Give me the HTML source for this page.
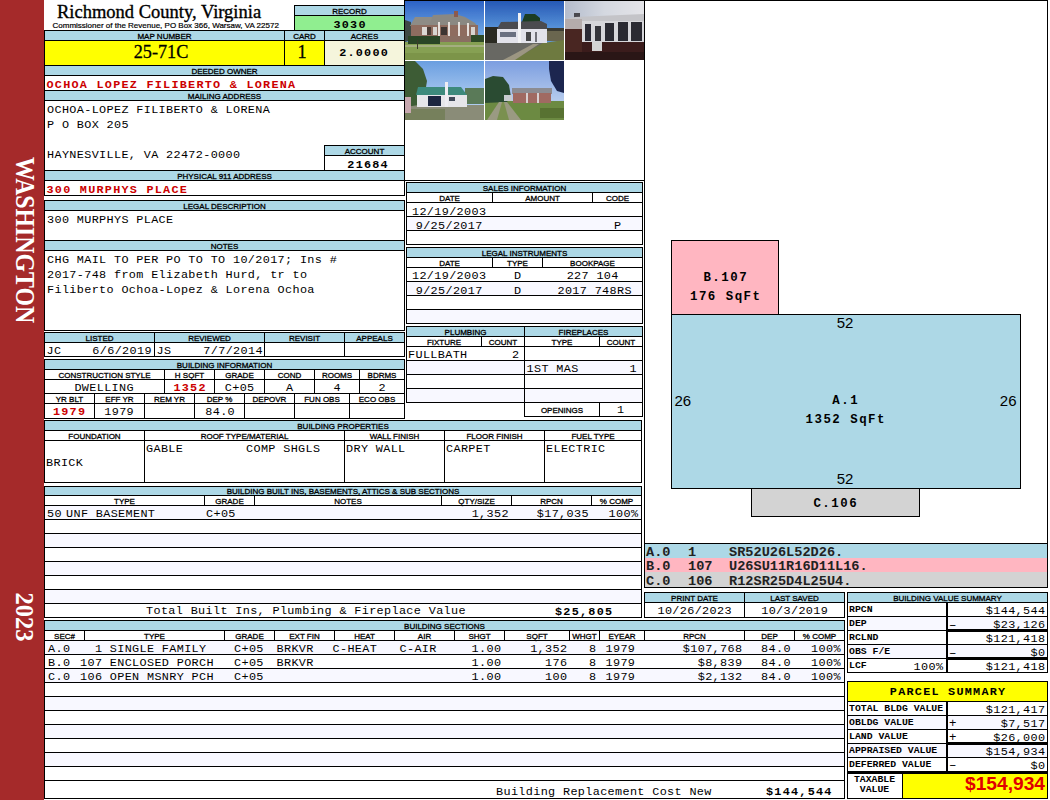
<!DOCTYPE html>
<html><head><meta charset="utf-8"><style>
html,body{margin:0;padding:0;background:#fff;width:1050px;height:800px;overflow:hidden}
#p{position:relative;width:1050px;height:800px;overflow:hidden}
#p div{position:absolute}
.t{white-space:pre}
</style></head><body><div id="p">
<div style="left:0px;top:0px;width:44px;height:800px;background:#A52A2A"></div>
<div class="t" style="left:57px;top:3.31px;font-family:'Liberation Serif', serif;font-size:18.5px;line-height:18.5px;color:#000;font-weight:normal;-webkit-text-stroke:0.35px #000;">Richmond County, Virginia</div>
<div class="t" style="left:52.5px;top:22.23px;font-family:'Liberation Sans', sans-serif;font-size:8.0px;line-height:8.0px;color:#000;font-weight:normal;-webkit-text-stroke:0.2px #000;">Commissioner of the Revenue, PO Box 366, Warsaw, VA 22572</div>
<div style="left:294px;top:5px;width:110px;height:10px;background:#ADD8E6"></div>
<div style="left:294px;top:15px;width:110px;height:15px;background:#90EE90"></div>
<div style="left:294px;top:5px;width:111px;height:1px;background:#000"></div>
<div style="left:294px;top:30px;width:111px;height:1px;background:#000"></div>
<div style="left:294px;top:5px;width:1px;height:26px;background:#000"></div>
<div style="left:404px;top:5px;width:1px;height:26px;background:#000"></div>
<div style="left:294px;top:15px;width:111px;height:1px;background:#000"></div>
<div class="t" style="left:49.5px;width:600px;text-align:center;top:8.23px;font-family:'Liberation Sans', sans-serif;font-size:8.0px;line-height:8.0px;color:#000;font-weight:normal;-webkit-text-stroke:0.3px #000;">RECORD</div>
<div class="t" style="left:50.125px;width:600px;text-align:center;top:19.96px;font-family:'Liberation Mono', monospace;font-size:11.8px;line-height:11.8px;color:#000;font-weight:bold;letter-spacing:1.25px;">3030</div>
<div style="left:44px;top:30px;width:360px;height:10px;background:#ADD8E6"></div>
<div style="left:44px;top:40px;width:280px;height:25px;background:#FFFF00"></div>
<div style="left:324px;top:40px;width:80px;height:25px;background:#F5F5DC"></div>
<div style="left:44px;top:65px;width:360px;height:10px;background:#ADD8E6"></div>
<div style="left:44px;top:90px;width:360px;height:10px;background:#ADD8E6"></div>
<div style="left:44px;top:170px;width:360px;height:10px;background:#ADD8E6"></div>
<div style="left:324px;top:145px;width:80px;height:10px;background:#ADD8E6"></div>
<div style="left:44px;top:30px;width:361px;height:1px;background:#000"></div>
<div style="left:44px;top:195px;width:361px;height:1px;background:#000"></div>
<div style="left:44px;top:30px;width:1px;height:166px;background:#000"></div>
<div style="left:404px;top:30px;width:1px;height:166px;background:#000"></div>
<div style="left:44px;top:40px;width:361px;height:1px;background:#000"></div>
<div style="left:44px;top:65px;width:361px;height:1px;background:#000"></div>
<div style="left:44px;top:75px;width:361px;height:1px;background:#000"></div>
<div style="left:44px;top:90px;width:361px;height:1px;background:#000"></div>
<div style="left:44px;top:100px;width:361px;height:1px;background:#000"></div>
<div style="left:44px;top:170px;width:361px;height:1px;background:#000"></div>
<div style="left:44px;top:180px;width:361px;height:1px;background:#000"></div>
<div style="left:284px;top:30px;width:1px;height:36px;background:#000"></div>
<div style="left:324px;top:30px;width:1px;height:36px;background:#000"></div>
<div style="left:324px;top:145px;width:1px;height:26px;background:#000"></div>
<div style="left:324px;top:145px;width:81px;height:1px;background:#000"></div>
<div style="left:324px;top:155px;width:81px;height:1px;background:#000"></div>
<div class="t" style="left:-135.5px;width:600px;text-align:center;top:33.23px;font-family:'Liberation Sans', sans-serif;font-size:8.0px;line-height:8.0px;color:#000;font-weight:normal;-webkit-text-stroke:0.3px #000;">MAP NUMBER</div>
<div class="t" style="left:4.5px;width:600px;text-align:center;top:33.23px;font-family:'Liberation Sans', sans-serif;font-size:8.0px;line-height:8.0px;color:#000;font-weight:normal;-webkit-text-stroke:0.3px #000;">CARD</div>
<div class="t" style="left:64.5px;width:600px;text-align:center;top:33.23px;font-family:'Liberation Sans', sans-serif;font-size:8.0px;line-height:8.0px;color:#000;font-weight:normal;-webkit-text-stroke:0.3px #000;">ACRES</div>
<div class="t" style="left:-139px;width:600px;text-align:center;top:43.26px;font-family:'Liberation Serif', serif;font-size:18.2px;line-height:18.2px;color:#000;font-weight:normal;-webkit-text-stroke:0.3px #000;">25-71C</div>
<div class="t" style="left:2px;width:600px;text-align:center;top:43.26px;font-family:'Liberation Serif', serif;font-size:18.2px;line-height:18.2px;color:#000;font-weight:normal;-webkit-text-stroke:0.3px #000;">1</div>
<div class="t" style="left:64.125px;width:600px;text-align:center;top:47.96px;font-family:'Liberation Mono', monospace;font-size:11.8px;line-height:11.8px;color:#000;font-weight:bold;letter-spacing:1.25px;">2.0000</div>
<div class="t" style="left:-75.5px;width:600px;text-align:center;top:68.23px;font-family:'Liberation Sans', sans-serif;font-size:8.0px;line-height:8.0px;color:#000;font-weight:normal;-webkit-text-stroke:0.3px #000;">DEEDED OWNER</div>
<div class="t" style="left:46.5px;top:79.96px;font-family:'Liberation Mono', monospace;font-size:11.8px;line-height:11.8px;color:#CC0000;font-weight:bold;letter-spacing:1.25px;">OCHOA LOPEZ FILIBERTO &amp; LORENA</div>
<div class="t" style="left:-75.5px;width:600px;text-align:center;top:93.23px;font-family:'Liberation Sans', sans-serif;font-size:8.0px;line-height:8.0px;color:#000;font-weight:normal;-webkit-text-stroke:0.3px #000;">MAILING ADDRESS</div>
<div class="t" style="left:47px;top:104.96px;font-family:'Liberation Mono', monospace;font-size:11.8px;line-height:11.8px;color:#000;font-weight:normal;letter-spacing:0.36px;">OCHOA-LOPEZ FILIBERTO &amp; LORENA</div>
<div class="t" style="left:47px;top:119.96px;font-family:'Liberation Mono', monospace;font-size:11.8px;line-height:11.8px;color:#000;font-weight:normal;letter-spacing:0.36px;">P O BOX 205</div>
<div class="t" style="left:47px;top:149.96px;font-family:'Liberation Mono', monospace;font-size:11.8px;line-height:11.8px;color:#000;font-weight:normal;letter-spacing:0.36px;">HAYNESVILLE, VA 22472-0000</div>
<div class="t" style="left:64.5px;width:600px;text-align:center;top:148.23px;font-family:'Liberation Sans', sans-serif;font-size:8.0px;line-height:8.0px;color:#000;font-weight:normal;-webkit-text-stroke:0.3px #000;">ACCOUNT</div>
<div class="t" style="left:68.125px;width:600px;text-align:center;top:159.96px;font-family:'Liberation Mono', monospace;font-size:11.8px;line-height:11.8px;color:#000;font-weight:bold;letter-spacing:1.25px;">21684</div>
<div class="t" style="left:-75.5px;width:600px;text-align:center;top:173.23px;font-family:'Liberation Sans', sans-serif;font-size:8.0px;line-height:8.0px;color:#000;font-weight:normal;-webkit-text-stroke:0.3px #000;">PHYSICAL 911 ADDRESS</div>
<div class="t" style="left:46.5px;top:184.96px;font-family:'Liberation Mono', monospace;font-size:11.8px;line-height:11.8px;color:#CC0000;font-weight:bold;letter-spacing:1.25px;">300 MURPHYS PLACE</div>
<div style="left:44px;top:200px;width:360px;height:10px;background:#ADD8E6"></div>
<div style="left:44px;top:240px;width:360px;height:10px;background:#ADD8E6"></div>
<div style="left:44px;top:200px;width:361px;height:1px;background:#000"></div>
<div style="left:44px;top:330px;width:361px;height:1px;background:#000"></div>
<div style="left:44px;top:200px;width:1px;height:131px;background:#000"></div>
<div style="left:404px;top:200px;width:1px;height:131px;background:#000"></div>
<div style="left:44px;top:210px;width:361px;height:1px;background:#000"></div>
<div style="left:44px;top:240px;width:361px;height:1px;background:#000"></div>
<div style="left:44px;top:250px;width:361px;height:1px;background:#000"></div>
<div class="t" style="left:-75.5px;width:600px;text-align:center;top:203.23px;font-family:'Liberation Sans', sans-serif;font-size:8.0px;line-height:8.0px;color:#000;font-weight:normal;-webkit-text-stroke:0.3px #000;">LEGAL DESCRIPTION</div>
<div class="t" style="left:47px;top:214.96px;font-family:'Liberation Mono', monospace;font-size:11.8px;line-height:11.8px;color:#000;font-weight:normal;letter-spacing:0.36px;">300 MURPHYS PLACE</div>
<div class="t" style="left:-75.5px;width:600px;text-align:center;top:243.23px;font-family:'Liberation Sans', sans-serif;font-size:8.0px;line-height:8.0px;color:#000;font-weight:normal;-webkit-text-stroke:0.3px #000;">NOTES</div>
<div class="t" style="left:47px;top:254.96px;font-family:'Liberation Mono', monospace;font-size:11.8px;line-height:11.8px;color:#000;font-weight:normal;letter-spacing:0.36px;">CHG MAIL TO PER PO TO TO 10/2017; Ins #</div>
<div class="t" style="left:47px;top:269.96px;font-family:'Liberation Mono', monospace;font-size:11.8px;line-height:11.8px;color:#000;font-weight:normal;letter-spacing:0.36px;">2017-748 from Elizabeth Hurd, tr to</div>
<div class="t" style="left:47px;top:284.96px;font-family:'Liberation Mono', monospace;font-size:11.8px;line-height:11.8px;color:#000;font-weight:normal;letter-spacing:0.36px;">Filiberto Ochoa-Lopez &amp; Lorena Ochoa</div>
<div style="left:44px;top:332px;width:360px;height:10px;background:#ADD8E6"></div>
<div style="left:44px;top:332px;width:361px;height:1px;background:#000"></div>
<div style="left:44px;top:356px;width:361px;height:1px;background:#000"></div>
<div style="left:44px;top:332px;width:1px;height:25px;background:#000"></div>
<div style="left:404px;top:332px;width:1px;height:25px;background:#000"></div>
<div style="left:44px;top:342px;width:361px;height:1px;background:#000"></div>
<div style="left:154px;top:332px;width:1px;height:25px;background:#000"></div>
<div style="left:264px;top:332px;width:1px;height:25px;background:#000"></div>
<div style="left:344px;top:332px;width:1px;height:25px;background:#000"></div>
<div class="t" style="left:-200.5px;width:600px;text-align:center;top:335.23px;font-family:'Liberation Sans', sans-serif;font-size:8.0px;line-height:8.0px;color:#000;font-weight:normal;-webkit-text-stroke:0.3px #000;">LISTED</div>
<div class="t" style="left:-90.5px;width:600px;text-align:center;top:335.23px;font-family:'Liberation Sans', sans-serif;font-size:8.0px;line-height:8.0px;color:#000;font-weight:normal;-webkit-text-stroke:0.3px #000;">REVIEWED</div>
<div class="t" style="left:4.5px;width:600px;text-align:center;top:335.23px;font-family:'Liberation Sans', sans-serif;font-size:8.0px;line-height:8.0px;color:#000;font-weight:normal;-webkit-text-stroke:0.3px #000;">REVISIT</div>
<div class="t" style="left:74.5px;width:600px;text-align:center;top:335.23px;font-family:'Liberation Sans', sans-serif;font-size:8.0px;line-height:8.0px;color:#000;font-weight:normal;-webkit-text-stroke:0.3px #000;">APPEALS</div>
<div class="t" style="left:46.5px;top:345.96px;font-family:'Liberation Mono', monospace;font-size:11.8px;line-height:11.8px;color:#000;font-weight:normal;letter-spacing:0.36px;">JC</div>
<div class="t" style="left:-448.14px;width:600px;text-align:right;top:345.96px;font-family:'Liberation Mono', monospace;font-size:11.8px;line-height:11.8px;color:#000;font-weight:normal;letter-spacing:0.36px;">6/6/2019</div>
<div class="t" style="left:156.5px;top:345.96px;font-family:'Liberation Mono', monospace;font-size:11.8px;line-height:11.8px;color:#000;font-weight:normal;letter-spacing:0.36px;">JS</div>
<div class="t" style="left:-337.14px;width:600px;text-align:right;top:345.96px;font-family:'Liberation Mono', monospace;font-size:11.8px;line-height:11.8px;color:#000;font-weight:normal;letter-spacing:0.36px;">7/7/2014</div>
<div style="left:44px;top:359px;width:360px;height:10px;background:#ADD8E6"></div>
<div style="left:44px;top:359px;width:361px;height:1px;background:#000"></div>
<div style="left:44px;top:418px;width:361px;height:1px;background:#000"></div>
<div style="left:44px;top:359px;width:1px;height:60px;background:#000"></div>
<div style="left:404px;top:359px;width:1px;height:60px;background:#000"></div>
<div style="left:44px;top:369px;width:361px;height:1px;background:#000"></div>
<div style="left:44px;top:379px;width:361px;height:1px;background:#000"></div>
<div style="left:44px;top:393px;width:361px;height:1px;background:#000"></div>
<div style="left:44px;top:403px;width:361px;height:1px;background:#000"></div>
<div style="left:164px;top:369px;width:1px;height:25px;background:#000"></div>
<div style="left:214px;top:369px;width:1px;height:25px;background:#000"></div>
<div style="left:264px;top:369px;width:1px;height:25px;background:#000"></div>
<div style="left:314px;top:369px;width:1px;height:25px;background:#000"></div>
<div style="left:359px;top:369px;width:1px;height:25px;background:#000"></div>
<div style="left:94px;top:393px;width:1px;height:26px;background:#000"></div>
<div style="left:144px;top:393px;width:1px;height:26px;background:#000"></div>
<div style="left:194px;top:393px;width:1px;height:26px;background:#000"></div>
<div style="left:244px;top:393px;width:1px;height:26px;background:#000"></div>
<div style="left:294px;top:393px;width:1px;height:26px;background:#000"></div>
<div style="left:349px;top:393px;width:1px;height:26px;background:#000"></div>
<div class="t" style="left:-75.5px;width:600px;text-align:center;top:362.23px;font-family:'Liberation Sans', sans-serif;font-size:8.0px;line-height:8.0px;color:#000;font-weight:normal;-webkit-text-stroke:0.3px #000;">BUILDING INFORMATION</div>
<div class="t" style="left:-195.5px;width:600px;text-align:center;top:372.23px;font-family:'Liberation Sans', sans-serif;font-size:8.0px;line-height:8.0px;color:#000;font-weight:normal;-webkit-text-stroke:0.3px #000;">CONSTRUCTION STYLE</div>
<div class="t" style="left:-110.5px;width:600px;text-align:center;top:372.23px;font-family:'Liberation Sans', sans-serif;font-size:8.0px;line-height:8.0px;color:#000;font-weight:normal;-webkit-text-stroke:0.3px #000;">H SQFT</div>
<div class="t" style="left:-60.5px;width:600px;text-align:center;top:372.23px;font-family:'Liberation Sans', sans-serif;font-size:8.0px;line-height:8.0px;color:#000;font-weight:normal;-webkit-text-stroke:0.3px #000;">GRADE</div>
<div class="t" style="left:-10.5px;width:600px;text-align:center;top:372.23px;font-family:'Liberation Sans', sans-serif;font-size:8.0px;line-height:8.0px;color:#000;font-weight:normal;-webkit-text-stroke:0.3px #000;">COND</div>
<div class="t" style="left:37.0px;width:600px;text-align:center;top:372.23px;font-family:'Liberation Sans', sans-serif;font-size:8.0px;line-height:8.0px;color:#000;font-weight:normal;-webkit-text-stroke:0.3px #000;">ROOMS</div>
<div class="t" style="left:82.0px;width:600px;text-align:center;top:372.23px;font-family:'Liberation Sans', sans-serif;font-size:8.0px;line-height:8.0px;color:#000;font-weight:normal;-webkit-text-stroke:0.3px #000;">BDRMS</div>
<div class="t" style="left:-230.5px;width:600px;text-align:center;top:396.23px;font-family:'Liberation Sans', sans-serif;font-size:8.0px;line-height:8.0px;color:#000;font-weight:normal;-webkit-text-stroke:0.3px #000;">YR BLT</div>
<div class="t" style="left:-180.5px;width:600px;text-align:center;top:396.23px;font-family:'Liberation Sans', sans-serif;font-size:8.0px;line-height:8.0px;color:#000;font-weight:normal;-webkit-text-stroke:0.3px #000;">EFF YR</div>
<div class="t" style="left:-130.5px;width:600px;text-align:center;top:396.23px;font-family:'Liberation Sans', sans-serif;font-size:8.0px;line-height:8.0px;color:#000;font-weight:normal;-webkit-text-stroke:0.3px #000;">REM YR</div>
<div class="t" style="left:-80.5px;width:600px;text-align:center;top:396.23px;font-family:'Liberation Sans', sans-serif;font-size:8.0px;line-height:8.0px;color:#000;font-weight:normal;-webkit-text-stroke:0.3px #000;">DEP %</div>
<div class="t" style="left:-30.5px;width:600px;text-align:center;top:396.23px;font-family:'Liberation Sans', sans-serif;font-size:8.0px;line-height:8.0px;color:#000;font-weight:normal;-webkit-text-stroke:0.3px #000;">DEPOVR</div>
<div class="t" style="left:22.0px;width:600px;text-align:center;top:396.23px;font-family:'Liberation Sans', sans-serif;font-size:8.0px;line-height:8.0px;color:#000;font-weight:normal;-webkit-text-stroke:0.3px #000;">FUN OBS</div>
<div class="t" style="left:77.0px;width:600px;text-align:center;top:396.23px;font-family:'Liberation Sans', sans-serif;font-size:8.0px;line-height:8.0px;color:#000;font-weight:normal;-webkit-text-stroke:0.3px #000;">ECO OBS</div>
<div class="t" style="left:-195.82px;width:600px;text-align:center;top:382.96px;font-family:'Liberation Mono', monospace;font-size:11.8px;line-height:11.8px;color:#000;font-weight:normal;letter-spacing:0.36px;">DWELLING</div>
<div class="t" style="left:-109.875px;width:600px;text-align:center;top:382.96px;font-family:'Liberation Mono', monospace;font-size:11.8px;line-height:11.8px;color:#CC0000;font-weight:bold;letter-spacing:1.25px;">1352</div>
<div class="t" style="left:-60.31999999999999px;width:600px;text-align:center;top:382.96px;font-family:'Liberation Mono', monospace;font-size:11.8px;line-height:11.8px;color:#000;font-weight:normal;letter-spacing:0.36px;">C+05</div>
<div class="t" style="left:-10.319999999999993px;width:600px;text-align:center;top:382.96px;font-family:'Liberation Mono', monospace;font-size:11.8px;line-height:11.8px;color:#000;font-weight:normal;letter-spacing:0.36px;">A</div>
<div class="t" style="left:37.18000000000001px;width:600px;text-align:center;top:382.96px;font-family:'Liberation Mono', monospace;font-size:11.8px;line-height:11.8px;color:#000;font-weight:normal;letter-spacing:0.36px;">4</div>
<div class="t" style="left:82.18px;width:600px;text-align:center;top:382.96px;font-family:'Liberation Mono', monospace;font-size:11.8px;line-height:11.8px;color:#000;font-weight:normal;letter-spacing:0.36px;">2</div>
<div class="t" style="left:-230.375px;width:600px;text-align:center;top:406.96px;font-family:'Liberation Mono', monospace;font-size:11.8px;line-height:11.8px;color:#CC0000;font-weight:bold;letter-spacing:1.25px;">1979</div>
<div class="t" style="left:-180.82px;width:600px;text-align:center;top:406.96px;font-family:'Liberation Mono', monospace;font-size:11.8px;line-height:11.8px;color:#000;font-weight:normal;letter-spacing:0.36px;">1979</div>
<div class="t" style="left:-79.82px;width:600px;text-align:center;top:406.96px;font-family:'Liberation Mono', monospace;font-size:11.8px;line-height:11.8px;color:#000;font-weight:normal;letter-spacing:0.36px;">84.0</div>
<div style="left:44px;top:420px;width:597px;height:10px;background:#ADD8E6"></div>
<div style="left:44px;top:420px;width:598px;height:1px;background:#000"></div>
<div style="left:44px;top:482px;width:598px;height:1px;background:#000"></div>
<div style="left:44px;top:420px;width:1px;height:63px;background:#000"></div>
<div style="left:641px;top:420px;width:1px;height:63px;background:#000"></div>
<div style="left:44px;top:430px;width:598px;height:1px;background:#000"></div>
<div style="left:44px;top:440px;width:598px;height:1px;background:#000"></div>
<div style="left:144px;top:430px;width:1px;height:53px;background:#000"></div>
<div style="left:344px;top:430px;width:1px;height:53px;background:#000"></div>
<div style="left:444px;top:430px;width:1px;height:53px;background:#000"></div>
<div style="left:544px;top:430px;width:1px;height:53px;background:#000"></div>
<div class="t" style="left:43.0px;width:600px;text-align:center;top:423.23px;font-family:'Liberation Sans', sans-serif;font-size:8.0px;line-height:8.0px;color:#000;font-weight:normal;-webkit-text-stroke:0.3px #000;">BUILDING PROPERTIES</div>
<div class="t" style="left:-205.5px;width:600px;text-align:center;top:433.23px;font-family:'Liberation Sans', sans-serif;font-size:8.0px;line-height:8.0px;color:#000;font-weight:normal;-webkit-text-stroke:0.3px #000;">FOUNDATION</div>
<div class="t" style="left:-55.5px;width:600px;text-align:center;top:433.23px;font-family:'Liberation Sans', sans-serif;font-size:8.0px;line-height:8.0px;color:#000;font-weight:normal;-webkit-text-stroke:0.3px #000;">ROOF TYPE/MATERIAL</div>
<div class="t" style="left:94.5px;width:600px;text-align:center;top:433.23px;font-family:'Liberation Sans', sans-serif;font-size:8.0px;line-height:8.0px;color:#000;font-weight:normal;-webkit-text-stroke:0.3px #000;">WALL FINISH</div>
<div class="t" style="left:194.5px;width:600px;text-align:center;top:433.23px;font-family:'Liberation Sans', sans-serif;font-size:8.0px;line-height:8.0px;color:#000;font-weight:normal;-webkit-text-stroke:0.3px #000;">FLOOR FINISH</div>
<div class="t" style="left:293.0px;width:600px;text-align:center;top:433.23px;font-family:'Liberation Sans', sans-serif;font-size:8.0px;line-height:8.0px;color:#000;font-weight:normal;-webkit-text-stroke:0.3px #000;">FUEL TYPE</div>
<div class="t" style="left:46px;top:457.96px;font-family:'Liberation Mono', monospace;font-size:11.8px;line-height:11.8px;color:#000;font-weight:normal;letter-spacing:0.36px;">BRICK</div>
<div class="t" style="left:146px;top:443.96px;font-family:'Liberation Mono', monospace;font-size:11.8px;line-height:11.8px;color:#000;font-weight:normal;letter-spacing:0.36px;">GABLE</div>
<div class="t" style="left:246px;top:443.96px;font-family:'Liberation Mono', monospace;font-size:11.8px;line-height:11.8px;color:#000;font-weight:normal;letter-spacing:0.36px;">COMP SHGLS</div>
<div class="t" style="left:346px;top:443.96px;font-family:'Liberation Mono', monospace;font-size:11.8px;line-height:11.8px;color:#000;font-weight:normal;letter-spacing:0.36px;">DRY WALL</div>
<div class="t" style="left:446px;top:443.96px;font-family:'Liberation Mono', monospace;font-size:11.8px;line-height:11.8px;color:#000;font-weight:normal;letter-spacing:0.36px;">CARPET</div>
<div class="t" style="left:546px;top:443.96px;font-family:'Liberation Mono', monospace;font-size:11.8px;line-height:11.8px;color:#000;font-weight:normal;letter-spacing:0.36px;">ELECTRIC</div>
<div style="left:44px;top:486px;width:597px;height:9px;background:#ADD8E6"></div>
<div style="left:44px;top:505px;width:597px;height:14px;background:#F8F8FF"></div>
<div style="left:44px;top:533px;width:597px;height:14px;background:#F8F8FF"></div>
<div style="left:44px;top:561px;width:597px;height:14px;background:#F8F8FF"></div>
<div style="left:44px;top:589px;width:597px;height:14px;background:#F8F8FF"></div>
<div style="left:44px;top:486px;width:598px;height:1px;background:#000"></div>
<div style="left:44px;top:617px;width:598px;height:1px;background:#000"></div>
<div style="left:44px;top:486px;width:1px;height:132px;background:#000"></div>
<div style="left:641px;top:486px;width:1px;height:132px;background:#000"></div>
<div style="left:44px;top:495px;width:598px;height:1px;background:#000"></div>
<div style="left:44px;top:505px;width:598px;height:1px;background:#000"></div>
<div style="left:44px;top:519px;width:598px;height:1px;background:#000"></div>
<div style="left:44px;top:533px;width:598px;height:1px;background:#000"></div>
<div style="left:44px;top:547px;width:598px;height:1px;background:#000"></div>
<div style="left:44px;top:561px;width:598px;height:1px;background:#000"></div>
<div style="left:44px;top:575px;width:598px;height:1px;background:#000"></div>
<div style="left:44px;top:589px;width:598px;height:1px;background:#000"></div>
<div style="left:44px;top:603px;width:598px;height:1px;background:#000"></div>
<div style="left:204px;top:495px;width:1px;height:11px;background:#000"></div>
<div style="left:254px;top:495px;width:1px;height:11px;background:#000"></div>
<div style="left:441px;top:495px;width:1px;height:11px;background:#000"></div>
<div style="left:511px;top:495px;width:1px;height:11px;background:#000"></div>
<div style="left:591px;top:495px;width:1px;height:11px;background:#000"></div>
<div class="t" style="left:43.0px;width:600px;text-align:center;top:488.23px;font-family:'Liberation Sans', sans-serif;font-size:8.0px;line-height:8.0px;color:#000;font-weight:normal;-webkit-text-stroke:0.3px #000;">BUILDING BUILT INS, BASEMENTS, ATTICS &amp; SUB SECTIONS</div>
<div class="t" style="left:-175.5px;width:600px;text-align:center;top:498.23px;font-family:'Liberation Sans', sans-serif;font-size:8.0px;line-height:8.0px;color:#000;font-weight:normal;-webkit-text-stroke:0.3px #000;">TYPE</div>
<div class="t" style="left:-70.5px;width:600px;text-align:center;top:498.23px;font-family:'Liberation Sans', sans-serif;font-size:8.0px;line-height:8.0px;color:#000;font-weight:normal;-webkit-text-stroke:0.3px #000;">GRADE</div>
<div class="t" style="left:48.0px;width:600px;text-align:center;top:498.23px;font-family:'Liberation Sans', sans-serif;font-size:8.0px;line-height:8.0px;color:#000;font-weight:normal;-webkit-text-stroke:0.3px #000;">NOTES</div>
<div class="t" style="left:176.5px;width:600px;text-align:center;top:498.23px;font-family:'Liberation Sans', sans-serif;font-size:8.0px;line-height:8.0px;color:#000;font-weight:normal;-webkit-text-stroke:0.3px #000;">QTY/SIZE</div>
<div class="t" style="left:251.5px;width:600px;text-align:center;top:498.23px;font-family:'Liberation Sans', sans-serif;font-size:8.0px;line-height:8.0px;color:#000;font-weight:normal;-webkit-text-stroke:0.3px #000;">RPCN</div>
<div class="t" style="left:316.5px;width:600px;text-align:center;top:498.23px;font-family:'Liberation Sans', sans-serif;font-size:8.0px;line-height:8.0px;color:#000;font-weight:normal;-webkit-text-stroke:0.3px #000;">% COMP</div>
<div class="t" style="left:47px;top:508.96px;font-family:'Liberation Mono', monospace;font-size:11.8px;line-height:11.8px;color:#000;font-weight:normal;letter-spacing:0.36px;">50</div>
<div class="t" style="left:66px;top:508.96px;font-family:'Liberation Mono', monospace;font-size:11.8px;line-height:11.8px;color:#000;font-weight:normal;letter-spacing:0.36px;">UNF BASEMENT</div>
<div class="t" style="left:206px;top:508.96px;font-family:'Liberation Mono', monospace;font-size:11.8px;line-height:11.8px;color:#000;font-weight:normal;letter-spacing:0.36px;">C+05</div>
<div class="t" style="left:-91.13999999999999px;width:600px;text-align:right;top:508.96px;font-family:'Liberation Mono', monospace;font-size:11.8px;line-height:11.8px;color:#000;font-weight:normal;letter-spacing:0.36px;">1,352</div>
<div class="t" style="left:-11.139999999999986px;width:600px;text-align:right;top:508.96px;font-family:'Liberation Mono', monospace;font-size:11.8px;line-height:11.8px;color:#000;font-weight:normal;letter-spacing:0.36px;">$17,035</div>
<div class="t" style="left:38.360000000000014px;width:600px;text-align:right;top:508.96px;font-family:'Liberation Mono', monospace;font-size:11.8px;line-height:11.8px;color:#000;font-weight:normal;letter-spacing:0.36px;">100%</div>
<div class="t" style="left:146px;top:605.96px;font-family:'Liberation Mono', monospace;font-size:11.8px;line-height:11.8px;color:#000;font-weight:normal;letter-spacing:0.36px;">Total Built Ins, Plumbing &amp; Fireplace Value</div>
<div class="t" style="left:555px;top:606.96px;font-family:'Liberation Mono', monospace;font-size:11.8px;line-height:11.8px;color:#000;font-weight:bold;letter-spacing:1.25px;">$25,805</div>
<div style="left:44px;top:620px;width:800px;height:10px;background:#ADD8E6"></div>
<div style="left:44px;top:640px;width:800px;height:14px;background:#F8F8FF"></div>
<div style="left:44px;top:668px;width:800px;height:14px;background:#F8F8FF"></div>
<div style="left:44px;top:696px;width:800px;height:14px;background:#F8F8FF"></div>
<div style="left:44px;top:724px;width:800px;height:14px;background:#F8F8FF"></div>
<div style="left:44px;top:752px;width:800px;height:14px;background:#F8F8FF"></div>
<div style="left:44px;top:620px;width:801px;height:1px;background:#000"></div>
<div style="left:44px;top:798px;width:801px;height:1px;background:#000"></div>
<div style="left:44px;top:620px;width:1px;height:179px;background:#000"></div>
<div style="left:844px;top:620px;width:1px;height:179px;background:#000"></div>
<div style="left:44px;top:630px;width:801px;height:1px;background:#000"></div>
<div style="left:44px;top:640px;width:801px;height:1px;background:#000"></div>
<div style="left:44px;top:654px;width:801px;height:1px;background:#000"></div>
<div style="left:44px;top:668px;width:801px;height:1px;background:#000"></div>
<div style="left:44px;top:682px;width:801px;height:1px;background:#000"></div>
<div style="left:44px;top:696px;width:801px;height:1px;background:#000"></div>
<div style="left:44px;top:710px;width:801px;height:1px;background:#000"></div>
<div style="left:44px;top:724px;width:801px;height:1px;background:#000"></div>
<div style="left:44px;top:738px;width:801px;height:1px;background:#000"></div>
<div style="left:44px;top:752px;width:801px;height:1px;background:#000"></div>
<div style="left:44px;top:766px;width:801px;height:1px;background:#000"></div>
<div style="left:44px;top:780px;width:801px;height:1px;background:#000"></div>
<div style="left:84px;top:630px;width:1px;height:11px;background:#000"></div>
<div style="left:224px;top:630px;width:1px;height:11px;background:#000"></div>
<div style="left:274px;top:630px;width:1px;height:11px;background:#000"></div>
<div style="left:334px;top:630px;width:1px;height:11px;background:#000"></div>
<div style="left:394px;top:630px;width:1px;height:11px;background:#000"></div>
<div style="left:454px;top:630px;width:1px;height:11px;background:#000"></div>
<div style="left:504px;top:630px;width:1px;height:11px;background:#000"></div>
<div style="left:569px;top:630px;width:1px;height:11px;background:#000"></div>
<div style="left:599px;top:630px;width:1px;height:11px;background:#000"></div>
<div style="left:644px;top:630px;width:1px;height:11px;background:#000"></div>
<div style="left:744px;top:630px;width:1px;height:11px;background:#000"></div>
<div style="left:794px;top:630px;width:1px;height:11px;background:#000"></div>
<div class="t" style="left:144.5px;width:600px;text-align:center;top:623.23px;font-family:'Liberation Sans', sans-serif;font-size:8.0px;line-height:8.0px;color:#000;font-weight:normal;-webkit-text-stroke:0.3px #000;">BUILDING SECTIONS</div>
<div class="t" style="left:-235.5px;width:600px;text-align:center;top:633.23px;font-family:'Liberation Sans', sans-serif;font-size:8.0px;line-height:8.0px;color:#000;font-weight:normal;-webkit-text-stroke:0.3px #000;">SEC#</div>
<div class="t" style="left:-145.5px;width:600px;text-align:center;top:633.23px;font-family:'Liberation Sans', sans-serif;font-size:8.0px;line-height:8.0px;color:#000;font-weight:normal;-webkit-text-stroke:0.3px #000;">TYPE</div>
<div class="t" style="left:-50.5px;width:600px;text-align:center;top:633.23px;font-family:'Liberation Sans', sans-serif;font-size:8.0px;line-height:8.0px;color:#000;font-weight:normal;-webkit-text-stroke:0.3px #000;">GRADE</div>
<div class="t" style="left:4.5px;width:600px;text-align:center;top:633.23px;font-family:'Liberation Sans', sans-serif;font-size:8.0px;line-height:8.0px;color:#000;font-weight:normal;-webkit-text-stroke:0.3px #000;">EXT FIN</div>
<div class="t" style="left:64.5px;width:600px;text-align:center;top:633.23px;font-family:'Liberation Sans', sans-serif;font-size:8.0px;line-height:8.0px;color:#000;font-weight:normal;-webkit-text-stroke:0.3px #000;">HEAT</div>
<div class="t" style="left:124.5px;width:600px;text-align:center;top:633.23px;font-family:'Liberation Sans', sans-serif;font-size:8.0px;line-height:8.0px;color:#000;font-weight:normal;-webkit-text-stroke:0.3px #000;">AIR</div>
<div class="t" style="left:179.5px;width:600px;text-align:center;top:633.23px;font-family:'Liberation Sans', sans-serif;font-size:8.0px;line-height:8.0px;color:#000;font-weight:normal;-webkit-text-stroke:0.3px #000;">SHGT</div>
<div class="t" style="left:237.0px;width:600px;text-align:center;top:633.23px;font-family:'Liberation Sans', sans-serif;font-size:8.0px;line-height:8.0px;color:#000;font-weight:normal;-webkit-text-stroke:0.3px #000;">SQFT</div>
<div class="t" style="left:284.5px;width:600px;text-align:center;top:633.23px;font-family:'Liberation Sans', sans-serif;font-size:8.0px;line-height:8.0px;color:#000;font-weight:normal;-webkit-text-stroke:0.3px #000;">WHGT</div>
<div class="t" style="left:322.0px;width:600px;text-align:center;top:633.23px;font-family:'Liberation Sans', sans-serif;font-size:8.0px;line-height:8.0px;color:#000;font-weight:normal;-webkit-text-stroke:0.3px #000;">EYEAR</div>
<div class="t" style="left:394.5px;width:600px;text-align:center;top:633.23px;font-family:'Liberation Sans', sans-serif;font-size:8.0px;line-height:8.0px;color:#000;font-weight:normal;-webkit-text-stroke:0.3px #000;">RPCN</div>
<div class="t" style="left:469.5px;width:600px;text-align:center;top:633.23px;font-family:'Liberation Sans', sans-serif;font-size:8.0px;line-height:8.0px;color:#000;font-weight:normal;-webkit-text-stroke:0.3px #000;">DEP</div>
<div class="t" style="left:519.5px;width:600px;text-align:center;top:633.23px;font-family:'Liberation Sans', sans-serif;font-size:8.0px;line-height:8.0px;color:#000;font-weight:normal;-webkit-text-stroke:0.3px #000;">% COMP</div>
<div class="t" style="left:48px;top:643.96px;font-family:'Liberation Mono', monospace;font-size:11.8px;line-height:11.8px;color:#000;font-weight:normal;letter-spacing:0.36px;">A.0</div>
<div class="t" style="left:80px;top:643.96px;font-family:'Liberation Mono', monospace;font-size:11.8px;line-height:11.8px;color:#000;font-weight:normal;letter-spacing:0.36px;">  1 SINGLE FAMILY</div>
<div class="t" style="left:234px;top:643.96px;font-family:'Liberation Mono', monospace;font-size:11.8px;line-height:11.8px;color:#000;font-weight:normal;letter-spacing:0.36px;">C+05</div>
<div class="t" style="left:276.5px;top:643.96px;font-family:'Liberation Mono', monospace;font-size:11.8px;line-height:11.8px;color:#000;font-weight:normal;letter-spacing:0.36px;">BRKVR</div>
<div class="t" style="left:332.5px;top:643.96px;font-family:'Liberation Mono', monospace;font-size:11.8px;line-height:11.8px;color:#000;font-weight:normal;letter-spacing:0.36px;">C-HEAT</div>
<div class="t" style="left:399.5px;top:643.96px;font-family:'Liberation Mono', monospace;font-size:11.8px;line-height:11.8px;color:#000;font-weight:normal;letter-spacing:0.36px;">C-AIR</div>
<div class="t" style="left:-98.63999999999999px;width:600px;text-align:right;top:643.96px;font-family:'Liberation Mono', monospace;font-size:11.8px;line-height:11.8px;color:#000;font-weight:normal;letter-spacing:0.36px;">1.00</div>
<div class="t" style="left:-32.639999999999986px;width:600px;text-align:right;top:643.96px;font-family:'Liberation Mono', monospace;font-size:11.8px;line-height:11.8px;color:#000;font-weight:normal;letter-spacing:0.36px;">1,352</div>
<div class="t" style="left:-3.6399999999999864px;width:600px;text-align:right;top:643.96px;font-family:'Liberation Mono', monospace;font-size:11.8px;line-height:11.8px;color:#000;font-weight:normal;letter-spacing:0.36px;">8</div>
<div class="t" style="left:605.5px;top:643.96px;font-family:'Liberation Mono', monospace;font-size:11.8px;line-height:11.8px;color:#000;font-weight:normal;letter-spacing:0.36px;">1979</div>
<div class="t" style="left:142.36px;width:600px;text-align:right;top:643.96px;font-family:'Liberation Mono', monospace;font-size:11.8px;line-height:11.8px;color:#000;font-weight:normal;letter-spacing:0.36px;">$107,768</div>
<div class="t" style="left:190.86px;width:600px;text-align:right;top:643.96px;font-family:'Liberation Mono', monospace;font-size:11.8px;line-height:11.8px;color:#000;font-weight:normal;letter-spacing:0.36px;">84.0</div>
<div class="t" style="left:240.86px;width:600px;text-align:right;top:643.96px;font-family:'Liberation Mono', monospace;font-size:11.8px;line-height:11.8px;color:#000;font-weight:normal;letter-spacing:0.36px;">100%</div>
<div class="t" style="left:48px;top:657.96px;font-family:'Liberation Mono', monospace;font-size:11.8px;line-height:11.8px;color:#000;font-weight:normal;letter-spacing:0.36px;">B.0</div>
<div class="t" style="left:80px;top:657.96px;font-family:'Liberation Mono', monospace;font-size:11.8px;line-height:11.8px;color:#000;font-weight:normal;letter-spacing:0.36px;">107 ENCLOSED PORCH</div>
<div class="t" style="left:234px;top:657.96px;font-family:'Liberation Mono', monospace;font-size:11.8px;line-height:11.8px;color:#000;font-weight:normal;letter-spacing:0.36px;">C+05</div>
<div class="t" style="left:276.5px;top:657.96px;font-family:'Liberation Mono', monospace;font-size:11.8px;line-height:11.8px;color:#000;font-weight:normal;letter-spacing:0.36px;">BRKVR</div>
<div class="t" style="left:332.5px;top:657.96px;font-family:'Liberation Mono', monospace;font-size:11.8px;line-height:11.8px;color:#000;font-weight:normal;letter-spacing:0.36px;"></div>
<div class="t" style="left:399.5px;top:657.96px;font-family:'Liberation Mono', monospace;font-size:11.8px;line-height:11.8px;color:#000;font-weight:normal;letter-spacing:0.36px;"></div>
<div class="t" style="left:-98.63999999999999px;width:600px;text-align:right;top:657.96px;font-family:'Liberation Mono', monospace;font-size:11.8px;line-height:11.8px;color:#000;font-weight:normal;letter-spacing:0.36px;">1.00</div>
<div class="t" style="left:-32.639999999999986px;width:600px;text-align:right;top:657.96px;font-family:'Liberation Mono', monospace;font-size:11.8px;line-height:11.8px;color:#000;font-weight:normal;letter-spacing:0.36px;">176</div>
<div class="t" style="left:-3.6399999999999864px;width:600px;text-align:right;top:657.96px;font-family:'Liberation Mono', monospace;font-size:11.8px;line-height:11.8px;color:#000;font-weight:normal;letter-spacing:0.36px;">8</div>
<div class="t" style="left:605.5px;top:657.96px;font-family:'Liberation Mono', monospace;font-size:11.8px;line-height:11.8px;color:#000;font-weight:normal;letter-spacing:0.36px;">1979</div>
<div class="t" style="left:142.36px;width:600px;text-align:right;top:657.96px;font-family:'Liberation Mono', monospace;font-size:11.8px;line-height:11.8px;color:#000;font-weight:normal;letter-spacing:0.36px;">$8,839</div>
<div class="t" style="left:190.86px;width:600px;text-align:right;top:657.96px;font-family:'Liberation Mono', monospace;font-size:11.8px;line-height:11.8px;color:#000;font-weight:normal;letter-spacing:0.36px;">84.0</div>
<div class="t" style="left:240.86px;width:600px;text-align:right;top:657.96px;font-family:'Liberation Mono', monospace;font-size:11.8px;line-height:11.8px;color:#000;font-weight:normal;letter-spacing:0.36px;">100%</div>
<div class="t" style="left:48px;top:671.96px;font-family:'Liberation Mono', monospace;font-size:11.8px;line-height:11.8px;color:#000;font-weight:normal;letter-spacing:0.36px;">C.0</div>
<div class="t" style="left:80px;top:671.96px;font-family:'Liberation Mono', monospace;font-size:11.8px;line-height:11.8px;color:#000;font-weight:normal;letter-spacing:0.36px;">106 OPEN MSNRY PCH</div>
<div class="t" style="left:234px;top:671.96px;font-family:'Liberation Mono', monospace;font-size:11.8px;line-height:11.8px;color:#000;font-weight:normal;letter-spacing:0.36px;">C+05</div>
<div class="t" style="left:276.5px;top:671.96px;font-family:'Liberation Mono', monospace;font-size:11.8px;line-height:11.8px;color:#000;font-weight:normal;letter-spacing:0.36px;"></div>
<div class="t" style="left:332.5px;top:671.96px;font-family:'Liberation Mono', monospace;font-size:11.8px;line-height:11.8px;color:#000;font-weight:normal;letter-spacing:0.36px;"></div>
<div class="t" style="left:399.5px;top:671.96px;font-family:'Liberation Mono', monospace;font-size:11.8px;line-height:11.8px;color:#000;font-weight:normal;letter-spacing:0.36px;"></div>
<div class="t" style="left:-98.63999999999999px;width:600px;text-align:right;top:671.96px;font-family:'Liberation Mono', monospace;font-size:11.8px;line-height:11.8px;color:#000;font-weight:normal;letter-spacing:0.36px;">1.00</div>
<div class="t" style="left:-32.639999999999986px;width:600px;text-align:right;top:671.96px;font-family:'Liberation Mono', monospace;font-size:11.8px;line-height:11.8px;color:#000;font-weight:normal;letter-spacing:0.36px;">100</div>
<div class="t" style="left:-3.6399999999999864px;width:600px;text-align:right;top:671.96px;font-family:'Liberation Mono', monospace;font-size:11.8px;line-height:11.8px;color:#000;font-weight:normal;letter-spacing:0.36px;">8</div>
<div class="t" style="left:605.5px;top:671.96px;font-family:'Liberation Mono', monospace;font-size:11.8px;line-height:11.8px;color:#000;font-weight:normal;letter-spacing:0.36px;">1979</div>
<div class="t" style="left:142.36px;width:600px;text-align:right;top:671.96px;font-family:'Liberation Mono', monospace;font-size:11.8px;line-height:11.8px;color:#000;font-weight:normal;letter-spacing:0.36px;">$2,132</div>
<div class="t" style="left:190.86px;width:600px;text-align:right;top:671.96px;font-family:'Liberation Mono', monospace;font-size:11.8px;line-height:11.8px;color:#000;font-weight:normal;letter-spacing:0.36px;">84.0</div>
<div class="t" style="left:240.86px;width:600px;text-align:right;top:671.96px;font-family:'Liberation Mono', monospace;font-size:11.8px;line-height:11.8px;color:#000;font-weight:normal;letter-spacing:0.36px;">100%</div>
<div class="t" style="left:496px;top:786.96px;font-family:'Liberation Mono', monospace;font-size:11.8px;line-height:11.8px;color:#000;font-weight:normal;letter-spacing:0.36px;">Building Replacement Cost New</div>
<div class="t" style="left:766px;top:786.96px;font-family:'Liberation Mono', monospace;font-size:11.8px;line-height:11.8px;color:#000;font-weight:bold;letter-spacing:1.25px;">$144,544</div>
<div style="left:404px;top:0px;width:1px;height:196px;background:#000"></div>
<div style="left:404px;top:180px;width:241px;height:1px;background:#000"></div>
<div style="left:404px;top:0px;width:644px;height:1px;background:#000"></div>
<div style="left:405px;top:0px;width:240px;height:121px;overflow:hidden">
<svg width="240" height="121" viewBox="0 0 240 121">
<defs>
<linearGradient id="s1" x1="0" y1="0" x2="0" y2="1"><stop offset="0" stop-color="#2a60c4"/><stop offset="0.55" stop-color="#6ea6e4"/><stop offset="1" stop-color="#80b4ea"/></linearGradient>
<linearGradient id="s2" x1="0" y1="0" x2="0" y2="1"><stop offset="0" stop-color="#2456b4"/><stop offset="0.5" stop-color="#5a96da"/><stop offset="1" stop-color="#6aa2de"/></linearGradient>
<linearGradient id="s3" x1="0" y1="0" x2="1" y2="0"><stop offset="0" stop-color="#b4bccc"/><stop offset="0.5" stop-color="#d4d8e0"/><stop offset="1" stop-color="#e4e4e8"/></linearGradient>
<linearGradient id="s4" x1="0" y1="0" x2="0" y2="1"><stop offset="0" stop-color="#6a9ee0"/><stop offset="0.6" stop-color="#a8c8f0"/><stop offset="1" stop-color="#b8d2f0"/></linearGradient>
<linearGradient id="s5" x1="0" y1="0" x2="0" y2="1"><stop offset="0" stop-color="#7c9ee0"/><stop offset="0.7" stop-color="#b8cdee"/><stop offset="1" stop-color="#c8d6ee"/></linearGradient>
<filter id="bl" x="0" y="0" width="1" height="1"><feGaussianBlur stdDeviation="0.55"/></filter>
</defs>
<!-- photo 1 -->
<svg x="0" y="0" width="79" height="60"><g filter="url(#bl)">
<rect width="79" height="60" fill="url(#s1)"/>
<polygon points="0,20 6,22 7,40 0,42" fill="#3c4a44"/>
<polygon points="5,26 10,17 28,17 30,26" fill="#8e8c86"/>
<polygon points="24,26 28,15 50,14 60,17 70,23 73,27" fill="#8a8882"/>
<rect x="49" y="11" width="4" height="6" fill="#8c5a4e"/>
<rect x="6" y="25" width="67" height="12" fill="#8e6c5e"/>
<rect x="17" y="27" width="5" height="8" fill="#dcd8d4"/>
<rect x="22" y="27" width="4" height="8" fill="#4a3a36"/>
<rect x="28" y="27" width="4" height="8" fill="#d8d4d0"/>
<rect x="33" y="22" width="2" height="16" fill="#e6e0dc"/>
<rect x="43" y="22" width="2" height="16" fill="#e6e0dc"/>
<rect x="36" y="27" width="6" height="8" fill="#3e3430"/>
<rect x="53" y="22" width="2" height="16" fill="#e6e0dc"/>
<rect x="62" y="23" width="2" height="15" fill="#e6e0dc"/>
<rect x="66" y="27" width="4" height="8" fill="#d8d4d0"/>
<rect x="0" y="42" width="79" height="18" fill="#86a052"/>
<rect x="0" y="45" width="79" height="2" fill="#a4ae80"/>
<rect x="0" y="53" width="79" height="7" fill="#7c9448"/>
<rect x="3" y="36" width="32" height="8" fill="#2c4426"/>
<rect x="35" y="36" width="31" height="6" fill="#8a6e62"/>
<rect x="66" y="35" width="13" height="7" fill="#2e4a28"/>
<rect x="12" y="40" width="1" height="9" fill="#3a3a2a"/>
</g></svg>
<!-- photo 2 -->
<svg x="80" y="0" width="79" height="60"><g filter="url(#bl)">
<rect width="79" height="60" fill="url(#s2)"/>
<rect x="0" y="27" width="13" height="18" fill="#2a2a22"/>
<rect x="61" y="30" width="18" height="11" fill="#6a6650"/>
<rect x="61" y="28" width="18" height="3" fill="#3a3a30"/>
<rect x="0" y="43" width="79" height="17" fill="#686864"/>
<polygon points="28,60 58,43 79,40 79,60" fill="#6e7a40"/>
<polygon points="18,60 30,60 54,44 48,44" fill="#9c9682"/>
<polygon points="37,22 40,14 50,14 55,18 55,22" fill="#1c3c20"/>
<polygon points="12,29 16,22 56,21 62,24 62,29" fill="#4c4c50"/>
<rect x="12" y="29" width="50" height="14" fill="#e2e2ea"/>
<rect x="15" y="32" width="16" height="5" fill="#6a7080"/>
<rect x="41" y="32" width="5" height="9" fill="#46464a"/>
<rect x="50" y="32" width="2" height="10" fill="#707078"/>
<rect x="33" y="13" width="3" height="30" fill="#f2f2f4"/>
</g></svg>
<!-- photo 3 -->
<svg x="160" y="0" width="79" height="60"><g filter="url(#bl)">
<rect width="79" height="60" fill="url(#s3)"/>
<rect x="9" y="13" width="6" height="6" fill="#4a4850"/>
<polygon points="0,19 10,17 79,14 79,22 0,24" fill="#c4c4c8"/>
<rect x="0" y="22" width="17" height="38" fill="#4a2624"/>
<rect x="0" y="19" width="17" height="10" fill="#b4acac"/>
<rect x="17" y="21" width="62" height="21" fill="#d6d6da"/>
<rect x="20" y="24" width="6" height="17" fill="#2c2c34"/>
<rect x="30" y="26" width="6" height="15" fill="#34343a"/>
<rect x="40" y="23" width="9" height="18" fill="#2a2a32"/>
<rect x="53" y="22" width="10" height="19" fill="#2a2a32"/>
<rect x="66" y="22" width="11" height="19" fill="#2a2a32"/>
<rect x="17" y="42" width="62" height="18" fill="#3a1e1e"/>
<rect x="27" y="42" width="10" height="9" fill="#d4d4d4"/>
<rect x="0" y="52" width="79" height="8" fill="#2a1818"/>
</g></svg>
<!-- photo 4 -->
<svg x="0" y="61" width="79" height="59"><g filter="url(#bl)">
<rect width="79" height="59" fill="url(#s4)"/>
<rect x="60" y="27" width="19" height="16" fill="#5a7a58"/>
<rect x="0" y="44" width="79" height="15" fill="#8a8c78"/>
<rect x="0" y="48" width="40" height="11" fill="#76805c"/>
<polygon points="0,0 10,0 18,8 22,20 20,32 14,44 0,46" fill="#3e5c36"/>
<polygon points="11,34 13,26 56,26 62,34" fill="#3c8a7c"/>
<rect x="12" y="34" width="50" height="12" fill="#e6e6ea"/>
<rect x="23" y="35" width="13" height="10" fill="#1a2640"/>
<rect x="44" y="36" width="6" height="4" fill="#404858"/>
<rect x="40" y="21" width="3" height="25" fill="#eeedf2"/>
<rect x="0" y="36" width="6" height="16" fill="#c8a8b0"/>
</g></svg>
<!-- photo 5 -->
<svg x="80" y="61" width="79" height="59"><g filter="url(#bl)">
<rect width="79" height="59" fill="url(#s5)"/>
<rect x="0" y="40" width="79" height="19" fill="#6c8a42"/>
<polygon points="0,18 8,15 18,16 24,24 26,36 22,41 0,42" fill="#2c4c32"/>
<polygon points="64,0 79,0 79,32 72,30 66,20 64,8" fill="#1a2650"/>
<rect x="27" y="27" width="40" height="6" fill="#8c8c92"/>
<rect x="28" y="32" width="38" height="10" fill="#a06a62"/>
<rect x="41" y="32" width="2" height="10" fill="#d8d0d0"/>
<rect x="52" y="32" width="2" height="10" fill="#d8d0d0"/>
<rect x="19" y="34" width="8" height="6" fill="#c8ccd0"/>
<polygon points="2,59 14,41 22,41 36,59" fill="#9a9a82"/>
<polygon points="12,59 17,41 19,41 24,59" fill="#7a9050"/>
<rect x="55" y="47" width="24" height="10" fill="#587230"/>
</g></svg>
</svg></div>

<div style="left:404px;top:0px;width:644px;height:1px;background:#000"></div>
<div style="left:406px;top:182px;width:236px;height:10px;background:#ADD8E6"></div>
<div style="left:406px;top:216px;width:236px;height:14px;background:#F8F8FF"></div>
<div style="left:406px;top:182px;width:237px;height:1px;background:#000"></div>
<div style="left:406px;top:244px;width:237px;height:1px;background:#000"></div>
<div style="left:406px;top:182px;width:1px;height:63px;background:#000"></div>
<div style="left:642px;top:182px;width:1px;height:63px;background:#000"></div>
<div style="left:406px;top:192px;width:237px;height:1px;background:#000"></div>
<div style="left:406px;top:202px;width:237px;height:1px;background:#000"></div>
<div style="left:406px;top:216px;width:237px;height:1px;background:#000"></div>
<div style="left:406px;top:230px;width:237px;height:1px;background:#000"></div>
<div style="left:492px;top:192px;width:1px;height:11px;background:#000"></div>
<div style="left:592px;top:192px;width:1px;height:11px;background:#000"></div>
<div class="t" style="left:224.5px;width:600px;text-align:center;top:185.23px;font-family:'Liberation Sans', sans-serif;font-size:8.0px;line-height:8.0px;color:#000;font-weight:normal;-webkit-text-stroke:0.3px #000;">SALES INFORMATION</div>
<div class="t" style="left:149.5px;width:600px;text-align:center;top:195.23px;font-family:'Liberation Sans', sans-serif;font-size:8.0px;line-height:8.0px;color:#000;font-weight:normal;-webkit-text-stroke:0.3px #000;">DATE</div>
<div class="t" style="left:242.5px;width:600px;text-align:center;top:195.23px;font-family:'Liberation Sans', sans-serif;font-size:8.0px;line-height:8.0px;color:#000;font-weight:normal;-webkit-text-stroke:0.3px #000;">AMOUNT</div>
<div class="t" style="left:317.5px;width:600px;text-align:center;top:195.23px;font-family:'Liberation Sans', sans-serif;font-size:8.0px;line-height:8.0px;color:#000;font-weight:normal;-webkit-text-stroke:0.3px #000;">CODE</div>
<div class="t" style="left:149.18px;width:600px;text-align:center;top:206.96px;font-family:'Liberation Mono', monospace;font-size:11.8px;line-height:11.8px;color:#000;font-weight:normal;letter-spacing:0.36px;">12/19/2003</div>
<div class="t" style="left:149.18px;width:600px;text-align:center;top:220.96px;font-family:'Liberation Mono', monospace;font-size:11.8px;line-height:11.8px;color:#000;font-weight:normal;letter-spacing:0.36px;">9/25/2017</div>
<div class="t" style="left:317.67999999999995px;width:600px;text-align:center;top:220.96px;font-family:'Liberation Mono', monospace;font-size:11.8px;line-height:11.8px;color:#000;font-weight:normal;letter-spacing:0.36px;">P</div>
<div style="left:406px;top:247px;width:236px;height:10px;background:#ADD8E6"></div>
<div style="left:406px;top:281px;width:236px;height:14px;background:#F8F8FF"></div>
<div style="left:406px;top:309px;width:236px;height:14px;background:#F8F8FF"></div>
<div style="left:406px;top:247px;width:237px;height:1px;background:#000"></div>
<div style="left:406px;top:323px;width:237px;height:1px;background:#000"></div>
<div style="left:406px;top:247px;width:1px;height:77px;background:#000"></div>
<div style="left:642px;top:247px;width:1px;height:77px;background:#000"></div>
<div style="left:406px;top:257px;width:237px;height:1px;background:#000"></div>
<div style="left:406px;top:267px;width:237px;height:1px;background:#000"></div>
<div style="left:406px;top:281px;width:237px;height:1px;background:#000"></div>
<div style="left:406px;top:295px;width:237px;height:1px;background:#000"></div>
<div style="left:406px;top:309px;width:237px;height:1px;background:#000"></div>
<div style="left:492px;top:257px;width:1px;height:11px;background:#000"></div>
<div style="left:542px;top:257px;width:1px;height:11px;background:#000"></div>
<div class="t" style="left:224.5px;width:600px;text-align:center;top:250.23px;font-family:'Liberation Sans', sans-serif;font-size:8.0px;line-height:8.0px;color:#000;font-weight:normal;-webkit-text-stroke:0.3px #000;">LEGAL INSTRUMENTS</div>
<div class="t" style="left:149.5px;width:600px;text-align:center;top:260.23px;font-family:'Liberation Sans', sans-serif;font-size:8.0px;line-height:8.0px;color:#000;font-weight:normal;-webkit-text-stroke:0.3px #000;">DATE</div>
<div class="t" style="left:217.5px;width:600px;text-align:center;top:260.23px;font-family:'Liberation Sans', sans-serif;font-size:8.0px;line-height:8.0px;color:#000;font-weight:normal;-webkit-text-stroke:0.3px #000;">TYPE</div>
<div class="t" style="left:292.5px;width:600px;text-align:center;top:260.23px;font-family:'Liberation Sans', sans-serif;font-size:8.0px;line-height:8.0px;color:#000;font-weight:normal;-webkit-text-stroke:0.3px #000;">BOOKPAGE</div>
<div class="t" style="left:149.18px;width:600px;text-align:center;top:270.96px;font-family:'Liberation Mono', monospace;font-size:11.8px;line-height:11.8px;color:#000;font-weight:normal;letter-spacing:0.36px;">12/19/2003</div>
<div class="t" style="left:217.67999999999995px;width:600px;text-align:center;top:270.96px;font-family:'Liberation Mono', monospace;font-size:11.8px;line-height:11.8px;color:#000;font-weight:normal;letter-spacing:0.36px;">D</div>
<div class="t" style="left:292.67999999999995px;width:600px;text-align:center;top:270.96px;font-family:'Liberation Mono', monospace;font-size:11.8px;line-height:11.8px;color:#000;font-weight:normal;letter-spacing:0.36px;">227 104</div>
<div class="t" style="left:149.18px;width:600px;text-align:center;top:285.96px;font-family:'Liberation Mono', monospace;font-size:11.8px;line-height:11.8px;color:#000;font-weight:normal;letter-spacing:0.36px;">9/25/2017</div>
<div class="t" style="left:217.67999999999995px;width:600px;text-align:center;top:285.96px;font-family:'Liberation Mono', monospace;font-size:11.8px;line-height:11.8px;color:#000;font-weight:normal;letter-spacing:0.36px;">D</div>
<div class="t" style="left:294.67999999999995px;width:600px;text-align:center;top:285.96px;font-family:'Liberation Mono', monospace;font-size:11.8px;line-height:11.8px;color:#000;font-weight:normal;letter-spacing:0.36px;">2017 748RS</div>
<div style="left:406px;top:326px;width:236px;height:10px;background:#ADD8E6"></div>
<div style="left:406px;top:360px;width:236px;height:14px;background:#F8F8FF"></div>
<div style="left:406px;top:388px;width:236px;height:14px;background:#F8F8FF"></div>
<div style="left:406px;top:326px;width:119px;height:1px;background:#000"></div>
<div style="left:406px;top:402px;width:119px;height:1px;background:#000"></div>
<div style="left:406px;top:326px;width:1px;height:77px;background:#000"></div>
<div style="left:524px;top:326px;width:1px;height:77px;background:#000"></div>
<div style="left:524px;top:326px;width:119px;height:1px;background:#000"></div>
<div style="left:524px;top:416px;width:119px;height:1px;background:#000"></div>
<div style="left:524px;top:326px;width:1px;height:91px;background:#000"></div>
<div style="left:642px;top:326px;width:1px;height:91px;background:#000"></div>
<div style="left:406px;top:336px;width:237px;height:1px;background:#000"></div>
<div style="left:406px;top:346px;width:237px;height:1px;background:#000"></div>
<div style="left:406px;top:360px;width:237px;height:1px;background:#000"></div>
<div style="left:406px;top:374px;width:237px;height:1px;background:#000"></div>
<div style="left:406px;top:388px;width:237px;height:1px;background:#000"></div>
<div style="left:524px;top:402px;width:119px;height:1px;background:#000"></div>
<div style="left:481px;top:336px;width:1px;height:11px;background:#000"></div>
<div style="left:599px;top:336px;width:1px;height:11px;background:#000"></div>
<div style="left:599px;top:402px;width:1px;height:15px;background:#000"></div>
<div class="t" style="left:165.5px;width:600px;text-align:center;top:329.23px;font-family:'Liberation Sans', sans-serif;font-size:8.0px;line-height:8.0px;color:#000;font-weight:normal;-webkit-text-stroke:0.3px #000;">PLUMBING</div>
<div class="t" style="left:283.5px;width:600px;text-align:center;top:329.23px;font-family:'Liberation Sans', sans-serif;font-size:8.0px;line-height:8.0px;color:#000;font-weight:normal;-webkit-text-stroke:0.3px #000;">FIREPLACES</div>
<div class="t" style="left:144.0px;width:600px;text-align:center;top:339.23px;font-family:'Liberation Sans', sans-serif;font-size:8.0px;line-height:8.0px;color:#000;font-weight:normal;-webkit-text-stroke:0.3px #000;">FIXTURE</div>
<div class="t" style="left:203.0px;width:600px;text-align:center;top:339.23px;font-family:'Liberation Sans', sans-serif;font-size:8.0px;line-height:8.0px;color:#000;font-weight:normal;-webkit-text-stroke:0.3px #000;">COUNT</div>
<div class="t" style="left:262.0px;width:600px;text-align:center;top:339.23px;font-family:'Liberation Sans', sans-serif;font-size:8.0px;line-height:8.0px;color:#000;font-weight:normal;-webkit-text-stroke:0.3px #000;">TYPE</div>
<div class="t" style="left:321.0px;width:600px;text-align:center;top:339.23px;font-family:'Liberation Sans', sans-serif;font-size:8.0px;line-height:8.0px;color:#000;font-weight:normal;-webkit-text-stroke:0.3px #000;">COUNT</div>
<div class="t" style="left:408px;top:349.96px;font-family:'Liberation Mono', monospace;font-size:11.8px;line-height:11.8px;color:#000;font-weight:normal;letter-spacing:0.36px;">FULLBATH</div>
<div class="t" style="left:-80.63999999999999px;width:600px;text-align:right;top:349.96px;font-family:'Liberation Mono', monospace;font-size:11.8px;line-height:11.8px;color:#000;font-weight:normal;letter-spacing:0.36px;">2</div>
<div class="t" style="left:526.5px;top:363.96px;font-family:'Liberation Mono', monospace;font-size:11.8px;line-height:11.8px;color:#000;font-weight:normal;letter-spacing:0.36px;">1ST MAS</div>
<div class="t" style="left:36.860000000000014px;width:600px;text-align:right;top:363.96px;font-family:'Liberation Mono', monospace;font-size:11.8px;line-height:11.8px;color:#000;font-weight:normal;letter-spacing:0.36px;">1</div>
<div class="t" style="left:262.0px;width:600px;text-align:center;top:407.23px;font-family:'Liberation Sans', sans-serif;font-size:8.0px;line-height:8.0px;color:#000;font-weight:normal;-webkit-text-stroke:0.3px #000;">OPENINGS</div>
<div class="t" style="left:320.67999999999995px;width:600px;text-align:center;top:404.96px;font-family:'Liberation Mono', monospace;font-size:11.8px;line-height:11.8px;color:#000;font-weight:normal;letter-spacing:0.36px;">1</div>
<div style="left:644px;top:0px;width:404px;height:1px;background:#000"></div>
<div style="left:644px;top:587px;width:404px;height:1px;background:#000"></div>
<div style="left:644px;top:0px;width:1px;height:588px;background:#000"></div>
<div style="left:1047px;top:0px;width:1px;height:588px;background:#000"></div>
<div style="left:644px;top:543px;width:404px;height:1px;background:#000"></div>
<div style="left:645px;top:544px;width:402px;height:14px;background:#ADD8E6"></div>
<div style="left:645px;top:558px;width:402px;height:14px;background:#FFB6C1"></div>
<div style="left:645px;top:572px;width:402px;height:15px;background:#D3D3D3"></div>
<div style="left:644px;top:543px;width:404px;height:1px;background:#000"></div>
<div style="left:671px;top:240px;width:107px;height:74px;background:#FFB6C1"></div>
<div style="left:671px;top:240px;width:108px;height:1px;background:#000"></div>
<div style="left:671px;top:314px;width:108px;height:1px;background:#000"></div>
<div style="left:671px;top:240px;width:1px;height:75px;background:#000"></div>
<div style="left:778px;top:240px;width:1px;height:75px;background:#000"></div>
<div style="left:671px;top:314px;width:349px;height:174px;background:#ADD8E6"></div>
<div style="left:671px;top:314px;width:350px;height:1px;background:#000"></div>
<div style="left:671px;top:488px;width:350px;height:1px;background:#000"></div>
<div style="left:671px;top:314px;width:1px;height:175px;background:#000"></div>
<div style="left:1020px;top:314px;width:1px;height:175px;background:#000"></div>
<div style="left:751px;top:488px;width:168px;height:28px;background:#D3D3D3"></div>
<div style="left:751px;top:488px;width:169px;height:1px;background:#000"></div>
<div style="left:751px;top:516px;width:169px;height:1px;background:#000"></div>
<div style="left:751px;top:488px;width:1px;height:29px;background:#000"></div>
<div style="left:919px;top:488px;width:1px;height:29px;background:#000"></div>
<div class="t" style="left:425.75px;width:600px;text-align:center;top:271.50px;font-family:'Liberation Mono', monospace;font-size:12.4px;line-height:12.4px;color:#000;font-weight:bold;letter-spacing:1.5px;">B.107</div>
<div class="t" style="left:425.75px;width:600px;text-align:center;top:290.50px;font-family:'Liberation Mono', monospace;font-size:12.4px;line-height:12.4px;color:#000;font-weight:bold;letter-spacing:1.5px;">176 SqFt</div>
<div class="t" style="left:545.75px;width:600px;text-align:center;top:395.00px;font-family:'Liberation Mono', monospace;font-size:12.4px;line-height:12.4px;color:#000;font-weight:bold;letter-spacing:1.5px;">A.1</div>
<div class="t" style="left:545.75px;width:600px;text-align:center;top:413.50px;font-family:'Liberation Mono', monospace;font-size:12.4px;line-height:12.4px;color:#000;font-weight:bold;letter-spacing:1.5px;">1352 SqFt</div>
<div class="t" style="left:535.75px;width:600px;text-align:center;top:498.00px;font-family:'Liberation Mono', monospace;font-size:12.4px;line-height:12.4px;color:#000;font-weight:bold;letter-spacing:1.5px;">C.106</div>
<div class="t" style="left:545px;width:600px;text-align:center;top:315.30px;font-family:'Liberation Sans', sans-serif;font-size:15px;line-height:15px;color:#000;font-weight:normal;">52</div>
<div class="t" style="left:545px;width:600px;text-align:center;top:470.80px;font-family:'Liberation Sans', sans-serif;font-size:15px;line-height:15px;color:#000;font-weight:normal;">52</div>
<div class="t" style="left:674.5px;top:393.30px;font-family:'Liberation Sans', sans-serif;font-size:15px;line-height:15px;color:#000;font-weight:normal;">26</div>
<div class="t" style="left:416.5px;width:600px;text-align:right;top:393.30px;font-family:'Liberation Sans', sans-serif;font-size:15px;line-height:15px;color:#000;font-weight:normal;">26</div>
<div class="t" style="left:646px;top:545.58px;font-family:'Liberation Mono', monospace;font-size:13.6px;line-height:13.6px;color:#222;font-weight:bold;">A.0</div>
<div class="t" style="left:688px;top:545.58px;font-family:'Liberation Mono', monospace;font-size:13.6px;line-height:13.6px;color:#222;font-weight:bold;">1</div>
<div class="t" style="left:729px;top:545.58px;font-family:'Liberation Mono', monospace;font-size:13.6px;line-height:13.6px;color:#222;font-weight:bold;">SR52U26L52D26.</div>
<div class="t" style="left:646px;top:560.08px;font-family:'Liberation Mono', monospace;font-size:13.6px;line-height:13.6px;color:#222;font-weight:bold;">B.0</div>
<div class="t" style="left:688px;top:560.08px;font-family:'Liberation Mono', monospace;font-size:13.6px;line-height:13.6px;color:#222;font-weight:bold;">107</div>
<div class="t" style="left:729px;top:560.08px;font-family:'Liberation Mono', monospace;font-size:13.6px;line-height:13.6px;color:#222;font-weight:bold;">U26SU11R16D11L16.</div>
<div class="t" style="left:646px;top:574.58px;font-family:'Liberation Mono', monospace;font-size:13.6px;line-height:13.6px;color:#222;font-weight:bold;">C.0</div>
<div class="t" style="left:688px;top:574.58px;font-family:'Liberation Mono', monospace;font-size:13.6px;line-height:13.6px;color:#222;font-weight:bold;">106</div>
<div class="t" style="left:729px;top:574.58px;font-family:'Liberation Mono', monospace;font-size:13.6px;line-height:13.6px;color:#222;font-weight:bold;">R12SR25D4L25U4.</div>
<div style="left:644px;top:592px;width:200px;height:10px;background:#ADD8E6"></div>
<div style="left:644px;top:592px;width:201px;height:1px;background:#000"></div>
<div style="left:644px;top:617px;width:201px;height:1px;background:#000"></div>
<div style="left:644px;top:592px;width:1px;height:26px;background:#000"></div>
<div style="left:844px;top:592px;width:1px;height:26px;background:#000"></div>
<div style="left:644px;top:602px;width:201px;height:1px;background:#000"></div>
<div style="left:744px;top:592px;width:1px;height:26px;background:#000"></div>
<div class="t" style="left:394.5px;width:600px;text-align:center;top:595.23px;font-family:'Liberation Sans', sans-serif;font-size:8.0px;line-height:8.0px;color:#000;font-weight:normal;-webkit-text-stroke:0.3px #000;">PRINT DATE</div>
<div class="t" style="left:494.5px;width:600px;text-align:center;top:595.23px;font-family:'Liberation Sans', sans-serif;font-size:8.0px;line-height:8.0px;color:#000;font-weight:normal;-webkit-text-stroke:0.3px #000;">LAST SAVED</div>
<div class="t" style="left:394.67999999999995px;width:600px;text-align:center;top:605.96px;font-family:'Liberation Mono', monospace;font-size:11.8px;line-height:11.8px;color:#000;font-weight:normal;letter-spacing:0.36px;">10/26/2023</div>
<div class="t" style="left:494.67999999999995px;width:600px;text-align:center;top:605.96px;font-family:'Liberation Mono', monospace;font-size:11.8px;line-height:11.8px;color:#000;font-weight:normal;letter-spacing:0.36px;">10/3/2019</div>
<div style="left:847px;top:592px;width:200px;height:10px;background:#ADD8E6"></div>
<div style="left:847px;top:616px;width:200px;height:14px;background:#F8F8FF"></div>
<div style="left:847px;top:644px;width:200px;height:14px;background:#F8F8FF"></div>
<div style="left:847px;top:592px;width:201px;height:1px;background:#000"></div>
<div style="left:847px;top:672px;width:201px;height:1px;background:#000"></div>
<div style="left:847px;top:592px;width:1px;height:81px;background:#000"></div>
<div style="left:1047px;top:592px;width:1px;height:81px;background:#000"></div>
<div style="left:847px;top:602px;width:201px;height:1px;background:#000"></div>
<div style="left:847px;top:616px;width:201px;height:1px;background:#000"></div>
<div style="left:847px;top:630px;width:201px;height:1px;background:#000"></div>
<div style="left:847px;top:644px;width:201px;height:1px;background:#000"></div>
<div style="left:847px;top:658px;width:201px;height:1px;background:#000"></div>
<div style="left:946px;top:602px;width:2px;height:71px;background:#000"></div>
<div style="left:947px;top:629px;width:101px;height:3px;background:#000"></div>
<div style="left:947px;top:657px;width:101px;height:3px;background:#000"></div>
<div class="t" style="left:647.5px;width:600px;text-align:center;top:595.23px;font-family:'Liberation Sans', sans-serif;font-size:8.0px;line-height:8.0px;color:#000;font-weight:normal;-webkit-text-stroke:0.3px #000;">BUILDING VALUE SUMMARY</div>
<div class="t" style="left:849px;top:605.49px;font-family:'Liberation Mono', monospace;font-size:9.8px;line-height:9.8px;color:#000;font-weight:bold;">RPCN</div>
<div class="t" style="left:445.3599999999999px;width:600px;text-align:right;top:605.96px;font-family:'Liberation Mono', monospace;font-size:11.8px;line-height:11.8px;color:#000;font-weight:normal;letter-spacing:0.36px;">$144,544</div>
<div class="t" style="left:849px;top:619.49px;font-family:'Liberation Mono', monospace;font-size:9.8px;line-height:9.8px;color:#000;font-weight:bold;">DEP</div>
<div class="t" style="left:949px;top:619.50px;font-family:'Liberation Mono', monospace;font-size:12.4px;line-height:12.4px;color:#000;font-weight:normal;">–</div>
<div class="t" style="left:445.3599999999999px;width:600px;text-align:right;top:619.96px;font-family:'Liberation Mono', monospace;font-size:11.8px;line-height:11.8px;color:#000;font-weight:normal;letter-spacing:0.36px;">$23,126</div>
<div class="t" style="left:849px;top:633.49px;font-family:'Liberation Mono', monospace;font-size:9.8px;line-height:9.8px;color:#000;font-weight:bold;">RCLND</div>
<div class="t" style="left:445.3599999999999px;width:600px;text-align:right;top:633.96px;font-family:'Liberation Mono', monospace;font-size:11.8px;line-height:11.8px;color:#000;font-weight:normal;letter-spacing:0.36px;">$121,418</div>
<div class="t" style="left:849px;top:647.49px;font-family:'Liberation Mono', monospace;font-size:9.8px;line-height:9.8px;color:#000;font-weight:bold;">OBS F/E</div>
<div class="t" style="left:949px;top:647.50px;font-family:'Liberation Mono', monospace;font-size:12.4px;line-height:12.4px;color:#000;font-weight:normal;">–</div>
<div class="t" style="left:445.3599999999999px;width:600px;text-align:right;top:647.96px;font-family:'Liberation Mono', monospace;font-size:11.8px;line-height:11.8px;color:#000;font-weight:normal;letter-spacing:0.36px;">$0</div>
<div class="t" style="left:849px;top:661.49px;font-family:'Liberation Mono', monospace;font-size:9.8px;line-height:9.8px;color:#000;font-weight:bold;">LCF</div>
<div class="t" style="left:445.3599999999999px;width:600px;text-align:right;top:661.96px;font-family:'Liberation Mono', monospace;font-size:11.8px;line-height:11.8px;color:#000;font-weight:normal;letter-spacing:0.36px;">$121,418</div>
<div class="t" style="left:343.36px;width:600px;text-align:right;top:661.96px;font-family:'Liberation Mono', monospace;font-size:11.8px;line-height:11.8px;color:#000;font-weight:normal;letter-spacing:0.36px;">100%</div>
<div style="left:847px;top:681px;width:200px;height:20px;background:#FFFF00"></div>
<div style="left:847px;top:715px;width:200px;height:14px;background:#F8F8FF"></div>
<div style="left:847px;top:743px;width:200px;height:14px;background:#F8F8FF"></div>
<div style="left:902px;top:771px;width:145px;height:27px;background:#FFFF00"></div>
<div style="left:847px;top:681px;width:201px;height:1px;background:#000"></div>
<div style="left:847px;top:798px;width:201px;height:1px;background:#000"></div>
<div style="left:847px;top:681px;width:1px;height:118px;background:#000"></div>
<div style="left:1047px;top:681px;width:1px;height:118px;background:#000"></div>
<div style="left:847px;top:701px;width:201px;height:1px;background:#000"></div>
<div style="left:847px;top:715px;width:201px;height:1px;background:#000"></div>
<div style="left:847px;top:729px;width:201px;height:1px;background:#000"></div>
<div style="left:847px;top:743px;width:201px;height:1px;background:#000"></div>
<div style="left:847px;top:757px;width:201px;height:1px;background:#000"></div>
<div style="left:847px;top:771px;width:201px;height:1px;background:#000"></div>
<div style="left:946px;top:701px;width:2px;height:71px;background:#000"></div>
<div style="left:902px;top:771px;width:1px;height:28px;background:#000"></div>
<div style="left:947px;top:742px;width:101px;height:3px;background:#000"></div>
<div style="left:847px;top:771px;width:201px;height:3px;background:#000"></div>
<div class="t" style="left:648.125px;width:600px;text-align:center;top:686.96px;font-family:'Liberation Mono', monospace;font-size:11.8px;line-height:11.8px;color:#000;font-weight:bold;letter-spacing:1.25px;">PARCEL SUMMARY</div>
<div class="t" style="left:849px;top:704.49px;font-family:'Liberation Mono', monospace;font-size:9.8px;line-height:9.8px;color:#000;font-weight:bold;">TOTAL BLDG VALUE</div>
<div class="t" style="left:445.3599999999999px;width:600px;text-align:right;top:704.96px;font-family:'Liberation Mono', monospace;font-size:11.8px;line-height:11.8px;color:#000;font-weight:normal;letter-spacing:0.36px;">$121,417</div>
<div class="t" style="left:849px;top:718.49px;font-family:'Liberation Mono', monospace;font-size:9.8px;line-height:9.8px;color:#000;font-weight:bold;">OBLDG VALUE</div>
<div class="t" style="left:949px;top:717.50px;font-family:'Liberation Mono', monospace;font-size:12.4px;line-height:12.4px;color:#000;font-weight:normal;">+</div>
<div class="t" style="left:445.3599999999999px;width:600px;text-align:right;top:718.96px;font-family:'Liberation Mono', monospace;font-size:11.8px;line-height:11.8px;color:#000;font-weight:normal;letter-spacing:0.36px;">$7,517</div>
<div class="t" style="left:849px;top:732.49px;font-family:'Liberation Mono', monospace;font-size:9.8px;line-height:9.8px;color:#000;font-weight:bold;">LAND VALUE</div>
<div class="t" style="left:949px;top:731.50px;font-family:'Liberation Mono', monospace;font-size:12.4px;line-height:12.4px;color:#000;font-weight:normal;">+</div>
<div class="t" style="left:445.3599999999999px;width:600px;text-align:right;top:732.96px;font-family:'Liberation Mono', monospace;font-size:11.8px;line-height:11.8px;color:#000;font-weight:normal;letter-spacing:0.36px;">$26,000</div>
<div class="t" style="left:849px;top:746.49px;font-family:'Liberation Mono', monospace;font-size:9.8px;line-height:9.8px;color:#000;font-weight:bold;">APPRAISED VALUE</div>
<div class="t" style="left:445.3599999999999px;width:600px;text-align:right;top:746.96px;font-family:'Liberation Mono', monospace;font-size:11.8px;line-height:11.8px;color:#000;font-weight:normal;letter-spacing:0.36px;">$154,934</div>
<div class="t" style="left:849px;top:760.49px;font-family:'Liberation Mono', monospace;font-size:9.8px;line-height:9.8px;color:#000;font-weight:bold;">DEFERRED VALUE</div>
<div class="t" style="left:949px;top:759.50px;font-family:'Liberation Mono', monospace;font-size:12.4px;line-height:12.4px;color:#000;font-weight:normal;">–</div>
<div class="t" style="left:445.3599999999999px;width:600px;text-align:right;top:760.96px;font-family:'Liberation Mono', monospace;font-size:11.8px;line-height:11.8px;color:#000;font-weight:normal;letter-spacing:0.36px;">$0</div>
<div class="t" style="left:574.5px;width:600px;text-align:center;top:775.49px;font-family:'Liberation Mono', monospace;font-size:9.8px;line-height:9.8px;color:#000;font-weight:bold;">TAXABLE</div>
<div class="t" style="left:574.5px;width:600px;text-align:center;top:785.49px;font-family:'Liberation Mono', monospace;font-size:9.8px;line-height:9.8px;color:#000;font-weight:bold;">VALUE</div>
<div class="t" style="left:445px;width:600px;text-align:right;top:774.24px;font-family:'Liberation Sans', sans-serif;font-size:19.2px;line-height:19.2px;color:#E00000;font-weight:bold;">$154,934</div>
<div class="t" style="left:-57.5px;top:226px;width:164px;height:26px;transform:rotate(90deg) scaleY(1.13);transform-origin:50% 50%;font-family:'Liberation Serif',serif;font-size:23.8px;line-height:26px;color:#fff;text-align:center;font-weight:bold">WASHINGTON</div>
<div class="t" style="left:-1px;top:604px;width:50px;height:26px;transform:rotate(90deg);transform-origin:50% 50%;font-family:'Liberation Serif',serif;font-size:24.5px;line-height:26px;color:#fff;text-align:center;font-weight:bold">2023</div>
</div></body></html>
